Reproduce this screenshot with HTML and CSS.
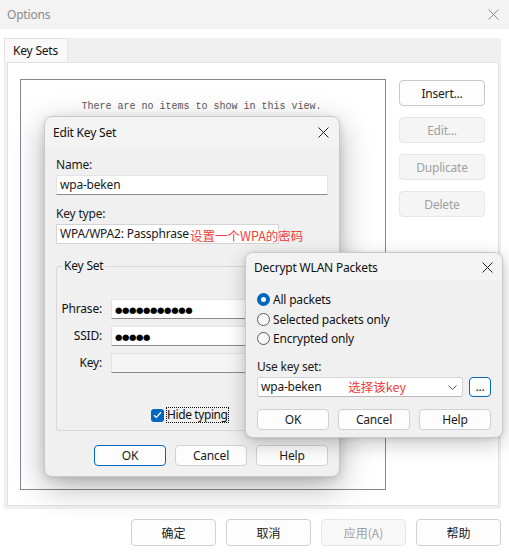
FILE: index.html
```html
<!DOCTYPE html>
<html>
<head>
<meta charset="utf-8">
<link rel="stylesheet" href="styles.css">
</head>
<body>
<div class="win">
  <div class="titlebar">
    <span class="title">Options</span>
    <svg class="xicon gray" width="11" height="11" viewBox="0 0 11 11"><path d="M0.5 0.5L10.5 10.5M10.5 0.5L0.5 10.5" stroke="currentColor" stroke-width="1"/></svg>
  </div>
  <div class="tabwrap">
    <div class="tabstrip"><div class="tab">Key Sets</div></div>
    <div class="panel">
      <div class="listview"><div class="empty">There are no items to show in this view.</div></div>
      <div class="sidebtns">
        <button class="btn side">Insert...</button>
        <button class="btn side disabled">Edit...</button>
        <button class="btn side disabled">Duplicate</button>
        <button class="btn side disabled">Delete</button>
      </div>
    </div>
  </div>
  <div class="footer">
    <button class="btn foot">确定</button>
    <button class="btn foot">取消</button>
    <button class="btn foot disabled">应用(A)</button>
    <button class="btn foot">帮助</button>
  </div>
</div>

<div class="dlg edit">
  <div class="dtitle">
    <span>Edit Key Set</span>
    <svg class="xicon" width="11" height="11" viewBox="0 0 11 11"><path d="M0.5 0.5L10.5 10.5M10.5 0.5L0.5 10.5" stroke="currentColor" stroke-width="1"/></svg>
  </div>
  <div class="dbody">
    <div class="lbl">Name:</div>
    <div class="field name">wpa-beken</div>
    <div class="lbl lbl2">Key type:</div>
    <div class="typerow">
      <div class="field keytype">WPA/WPA2: Passphrase</div>
      <span class="note">设置一个WPA的密码</span>
    </div>
    <fieldset class="group">
      <legend>Key Set</legend>
      <div class="grid">
        <label>Phrase:</label><div class="field pw"><span class="dots">●●●●●●●●●●●</span></div>
        <label>SSID:</label><div class="field pw"><span class="dots">●●●●●</span></div>
        <label>Key:</label><div class="field pw off"></div>
      </div>
      <div class="checkrow">
        <span class="cbox"><svg width="9" height="8" viewBox="0 0 9 8"><path d="M1 4.2L3.3 6.4L8 1.3" fill="none" stroke="#fff" stroke-width="1.3"/></svg></span>
        <span class="focus">Hide typing</span>
      </div>
    </fieldset>
    <div class="btnrow">
      <button class="btn dbtn default">OK</button>
      <button class="btn dbtn">Cancel</button>
      <button class="btn dbtn">Help</button>
    </div>
  </div>
</div>

<div class="dlg decrypt">
  <div class="dtitle dt2">
    <span>Decrypt WLAN Packets</span>
    <svg class="xicon" width="11" height="11" viewBox="0 0 11 11"><path d="M0.5 0.5L10.5 10.5M10.5 0.5L0.5 10.5" stroke="currentColor" stroke-width="1"/></svg>
  </div>
  <div class="dbody db2">
    <div class="radio"><span class="rb on"></span>All packets</div>
    <div class="radio"><span class="rb"></span>Selected packets only</div>
    <div class="radio"><span class="rb"></span>Encrypted only</div>
    <div class="lbl lbl3">Use key set:</div>
    <div class="comborow">
      <div class="combo">
        <span>wpa-beken</span>
        <span class="note note2">选择该key</span>
        <svg class="chev" width="9" height="5" viewBox="0 0 9 5"><path d="M0.5 0.5L4.5 4.5L8.5 0.5" fill="none" stroke="#555" stroke-width="1"/></svg>
      </div>
      <button class="btn more">...</button>
    </div>
    <div class="btnrow br2">
      <button class="btn dbtn">OK</button>
      <button class="btn dbtn">Cancel</button>
      <button class="btn dbtn">Help</button>
    </div>
  </div>
</div>
</body>
</html>
```
FILE: styles.css
```css
* { box-sizing: border-box; }
html, body { margin: 0; padding: 0; }
body {
  width: 509px;
  height: 553px;
  background: #fff;
  font-family: "Noto Sans", "Noto Sans CJK SC", sans-serif;
  font-size: 12px;
  letter-spacing: -0.2px;
  color: #1a1a1a;
  position: relative;
  overflow: hidden;
}
.win { width: 509px; height: 553px; }
.titlebar {
  height: 29px;
  background: #f3f3f3;
  display: flex;
  align-items: center;
  justify-content: space-between;
  padding: 0 10px 1px 7px;
}
.title { color: #8a8a8a; font-size: 12px; }
.xicon { display: block; color: #222; }
.xicon.gray { color: #8a8a8a; }

.tabwrap {
  margin: 9px 8px 0 4px;
  background: #f0f0f0;
  height: 471px;
  display: flex;
  flex-direction: column;
}
.tabstrip { height: 24px; display: flex; }
.tab {
  width: 64px;
  background: #f9f9f9;
  border: 1px solid #e2e2e2;
  border-bottom: none;
  padding: 3px 0 0 8px;
  color: #111;
}
.panel {
  flex: 1;
  margin: 0 2px 3px 3px;
  background: #fff;
  border: 1px solid #e3e3e3;
  display: flex;
  padding: 16px 0 0 12px;
}
.listview {
  width: 366px;
  height: 411px;
  border: 1px solid #828790;
  background: #fff;
  padding-top: 21px;
}
.empty {
  font-family: "Liberation Mono", monospace;
  font-size: 10px;
  letter-spacing: 0;
  color: #5a5a5a;
  text-align: center;
  padding-right: 3px;
}
.sidebtns {
  margin-left: 13px;
  margin-top: 1px;
  display: flex;
  flex-direction: column;
  gap: 11px;
}
.btn {
  font-family: inherit;
  font-size: 12px;
  letter-spacing: -0.2px;
  background: #fdfdfd;
  border: 1px solid #d0d0d0;
  border-radius: 4px;
  color: #1a1a1a;
  padding: 0;
  display: flex;
  align-items: center;
  justify-content: center;
}
.btn.side { width: 86px; height: 26px; border-color: #c8c8c8; }
.btn.disabled { background: #f5f5f5; border-color: #e6e6e6; color: #a0a0a0; }
.footer {
  display: flex;
  justify-content: flex-end;
  gap: 10px;
  padding: 10px 8px 0 0;
}
.btn.foot { width: 85px; height: 27px; font-family: "Noto Sans CJK SC", sans-serif; letter-spacing: 0; }
.btn.foot.disabled { background: #f8f8f8; }

.dlg {
  position: absolute;
  background: #f0f0f0;
  border: 1px solid #c9c9c9;
  border-radius: 8px;
  overflow: visible;
}
.edit {
  left: 44px;
  top: 116px;
  width: 296px;
  height: 361px;
  box-shadow: 0 10px 32px rgba(0,0,0,0.30), 0 2px 8px rgba(0,0,0,0.12);
}
.decrypt {
  left: 245px;
  top: 252px;
  width: 258px;
  height: 186px;
  box-shadow: 0 6px 20px rgba(0,0,0,0.22), 0 1px 4px rgba(0,0,0,0.1);
}
.dtitle {
  height: 30px;
  background: #f3f3f3;
  border-radius: 8px 8px 0 0;
  display: flex;
  align-items: center;
  justify-content: space-between;
  padding: 0 10px 0 8px;
  color: #111;
}
.dt2 { height: 28px; padding-right: 9px; }
.dbody { padding: 10px 11px 0 11px; }
.lbl { line-height: 16px; height: 16px; }
.lbl2 { margin-top: 11px; }
.field {
  background: #fff;
  border: 1px solid #e4e4e4;
  border-bottom-color: #8a8a8a;
  height: 20px;
  line-height: 18px;
  padding-left: 3px;
}
.name { margin-top: 2px; width: 272px; }
.typerow { display: flex; align-items: center; margin-top: 1px; }
.keytype { width: 223px; border: 1px solid #d5d5d5; flex: none; }
.note {
  color: #f23b3b;
  font-family: "Noto Sans CJK SC", sans-serif;
  font-size: 12.5px;
  letter-spacing: 0;
  margin-left: -89px;
  margin-top: 3px;
}
.group {
  margin: 13px 0 0 0;
  padding: 0 0 7px 0;
  width: 272px;
  border: 1px solid #d8d8d8;
  border-radius: 2px;
}
.group legend {
  padding: 0 2px;
  margin-left: 5px;
  line-height: 16px;
  color: #111;
}
.grid {
  display: grid;
  grid-template-columns: 45px 210px;
  column-gap: 9px;
  row-gap: 7px;
  margin-top: 25px;
}
.grid label { text-align: right; line-height: 20px; color: #111; }
.pw { padding-left: 3px; }
.dots {
  font-family: "DejaVu Sans", sans-serif;
  font-size: 8.5px;
  letter-spacing: -0.4px;
  color: #000;
  line-height: 18px;
}
.off { background: #f5f5f5; border-color: #e2e2e2; border-bottom-color: #8a8a8a; }
.checkrow {
  display: flex;
  align-items: center;
  margin: 34px 0 0 94px;
  height: 16px;
}
.cbox {
  width: 13px;
  height: 13px;
  border-radius: 3px;
  background: #0067c0;
  display: flex;
  align-items: center;
  justify-content: center;
}
.focus {
  margin-left: 2px;
  border: 1px dotted #111;
  padding: 0;
  line-height: 14px;
  color: #111;
  letter-spacing: -0.4px;
}
.btnrow {
  display: flex;
  justify-content: flex-end;
  gap: 9px;
  margin-top: 14px;
}
.btn.dbtn { width: 72px; height: 21px; }
.btn.default { border-color: #0067c0; }
.db2 { padding: 9px 11px 0 11px; }
.radio {
  display: flex;
  align-items: center;
  height: 19.5px;
  color: #111;
}
.rb {
  width: 13px;
  height: 13px;
  border-radius: 50%;
  border: 1px solid #5c5c5c;
  background: #f7f7f7;
  margin-right: 3px;
  flex: none;
}
.rb.on {
  border: 4px solid #0067c0;
  background: #fff;
}
.lbl3 { margin-top: 10px; }
.comborow { display: flex; gap: 6px; margin-top: 2px; }
.combo {
  width: 208px;
  height: 20px;
  background: #fff;
  border: 1px solid #d5d5d5;
  border-bottom-color: #b8b8b8;
  border-radius: 3px;
  display: flex;
  align-items: center;
  padding-left: 3px;
  position: relative;
}
.note2 { margin-left: 27px; margin-top: -1px; font-size: 12.5px; }
.chev { position: absolute; right: 5px; top: 7px; }
.btn.more {
  width: 22px;
  height: 20px;
  border-color: #0067c0;
  line-height: 10px;
  align-items: flex-end;
  padding-bottom: 4px;
}
.br2 { margin-top: 12px; }
```
